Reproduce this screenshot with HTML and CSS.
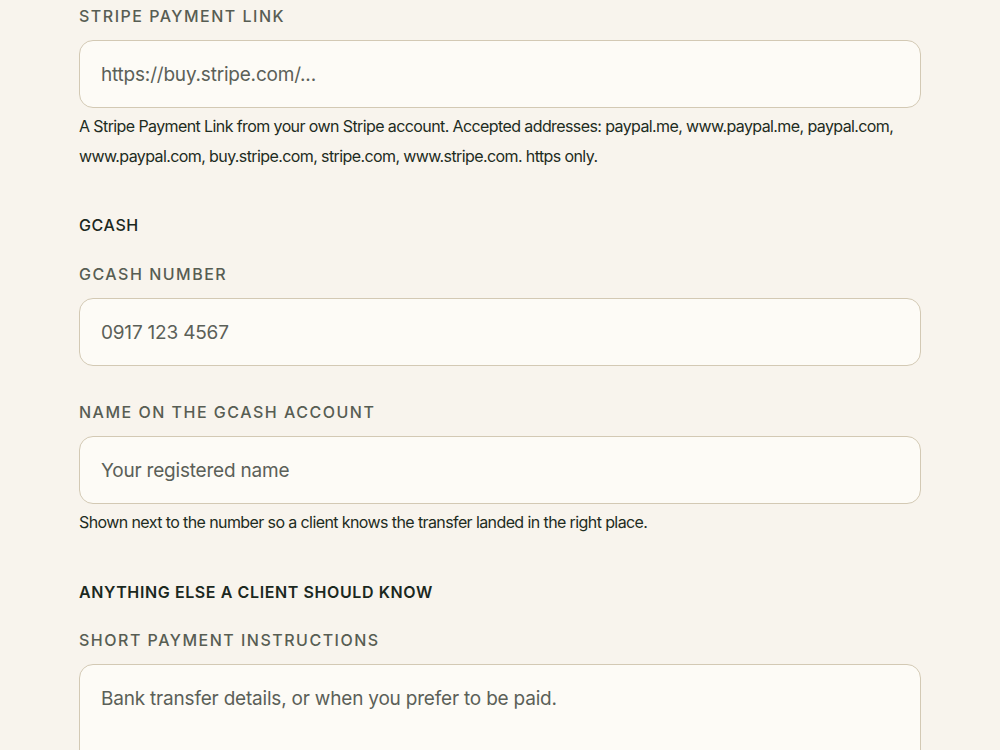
FILE: index.html
```html
<!DOCTYPE html>
<html lang="en">
<head>
<meta charset="utf-8">
<title>Payment settings</title>
<link rel="stylesheet" href="styles.css">
</head>
<body>
<main class="form">
  <div class="field">
    <label class="label" for="stripe">Stripe payment link</label>
    <input class="input" id="stripe" type="text" placeholder="https://buy.stripe.com/...">
    <p class="help">A Stripe Payment Link from your own Stripe account. Accepted addresses: paypal.me, www.paypal.me, paypal.com, www.paypal.com, buy.stripe.com, stripe.com, www.stripe.com. https only.</p>
  </div>

  <h2 class="section">GCash</h2>

  <div class="field">
    <label class="label" for="gnum">GCash number</label>
    <input class="input" id="gnum" type="text" placeholder="0917 123 4567">
  </div>

  <div class="field">
    <label class="label" for="gname">Name on the GCash account</label>
    <input class="input" id="gname" type="text" placeholder="Your registered name">
    <p class="help">Shown next to the number so a client knows the transfer landed in the right place.</p>
  </div>

  <h2 class="section strong">Anything else a client should know</h2>

  <div class="field">
    <label class="label" for="notes">Short payment instructions</label>
    <textarea class="input area" id="notes" placeholder="Bank transfer details, or when you prefer to be paid."></textarea>
  </div>
</main>
</body>
</html>
```

FILE: styles.css
```css
html, body {
  margin: 0;
  background: #f8f4ed;
}
body {
  font-family: Inter, "Liberation Sans", sans-serif;
  color: #1d2a21;
}
.form {
  width: 842px;
  margin-left: 79px;
  padding-top: 4px;
  display: flex;
  flex-direction: column;
}
.field {
  display: flex;
  flex-direction: column;
  margin-bottom: 34px;
}
.field:has(.help) {
  margin-bottom: 0;
}
.label {
  display: block;
  font-size: 16px;
  line-height: 24px;
  font-weight: 500;
  letter-spacing: 1.5px;
  text-transform: uppercase;
  color: #575d53;
  margin-bottom: 12px;
}
.input {
  box-sizing: border-box;
  height: 68px;
  width: 100%;
  border: 1.5px solid #d3c9b4;
  border-radius: 14px;
  background: #fdfbf6;
  padding: 0 21px;
  font-family: inherit;
  font-size: 19px;
  letter-spacing: -0.2px;
  color: #1d2a21;
  outline: none;
}
.input::placeholder {
  color: #5b6058;
  opacity: 1;
}
.area {
  height: 140px;
  padding-top: 20px;
  resize: none;
  line-height: 28px;
}
.help {
  margin: 3px 0 0;
  font-size: 16px;
  line-height: 30px;
  letter-spacing: -0.6px;
  color: #1e2c22;
}
.section {
  margin: 42px 0 25px;
  font-size: 16px;
  line-height: 24px;
  font-weight: 500;
  letter-spacing: 0.6px;
  text-transform: uppercase;
  color: #1b281e;
}
.section.strong {
  font-weight: 600;
  margin-top: 43px;
  margin-bottom: 24px;
}
```
